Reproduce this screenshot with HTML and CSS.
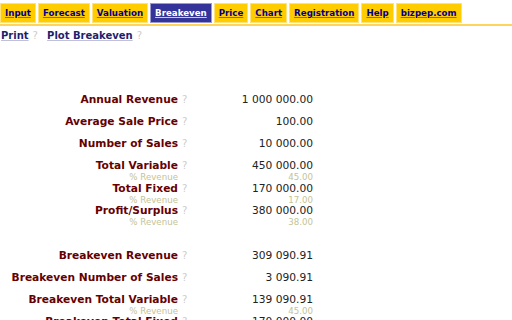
FILE: index.html
```html
<!DOCTYPE html>
<html>
<head>
<meta charset="utf-8">
<link rel="stylesheet" href="styles.css">
</head>
<body>
<nav class="tabs">
  <a class="tab" href="#">Input</a>
  <a class="tab" href="#">Forecast</a>
  <a class="tab" href="#">Valuation</a>
  <a class="tab active" href="#">Breakeven</a>
  <a class="tab" href="#">Price</a>
  <a class="tab" href="#">Chart</a>
  <a class="tab" href="#">Registration</a>
  <a class="tab" href="#">Help</a>
  <a class="tab" href="#">bizpep.com</a>
</nav>
<div class="sublinks">
  <a class="sublink" href="#">Print</a><span class="qm">?</span>
  <a class="sublink" href="#">Plot Breakeven</a><span class="qm">?</span>
</div>
<div class="results">
  <div class="block">
    <div class="row"><span class="label">Annual Revenue</span><span class="help">?</span><span class="value">1 000 000.00</span></div>
  </div>
  <div class="block">
    <div class="row"><span class="label">Average Sale Price</span><span class="help">?</span><span class="value">100.00</span></div>
  </div>
  <div class="block">
    <div class="row"><span class="label">Number of Sales</span><span class="help">?</span><span class="value">10 000.00</span></div>
  </div>
  <div class="block group">
    <div class="row"><span class="label">Total Variable</span><span class="help">?</span><span class="value">450 000.00</span></div>
    <div class="row subrow"><span class="label">% Revenue</span><span class="help"></span><span class="value">45.00</span></div>
    <div class="row"><span class="label">Total Fixed</span><span class="help">?</span><span class="value">170 000.00</span></div>
    <div class="row subrow"><span class="label">% Revenue</span><span class="help"></span><span class="value">17.00</span></div>
    <div class="row"><span class="label">Profit/Surplus</span><span class="help">?</span><span class="value">380 000.00</span></div>
    <div class="row subrow"><span class="label">% Revenue</span><span class="help"></span><span class="value">38.00</span></div>
  </div>
  <div class="block spaced">
    <div class="row"><span class="label">Breakeven Revenue</span><span class="help">?</span><span class="value">309 090.91</span></div>
  </div>
  <div class="block">
    <div class="row"><span class="label">Breakeven Number of Sales</span><span class="help">?</span><span class="value">3 090.91</span></div>
  </div>
  <div class="block group">
    <div class="row"><span class="label">Breakeven Total Variable</span><span class="help">?</span><span class="value">139 090.91</span></div>
    <div class="row subrow"><span class="label">% Revenue</span><span class="help"></span><span class="value">45.00</span></div>
    <div class="row"><span class="label">Breakeven Total Fixed</span><span class="help">?</span><span class="value">170 000.00</span></div>
    <div class="row subrow"><span class="label">% Revenue</span><span class="help"></span><span class="value">55.00</span></div>
  </div>
</div>
</body>
</html>
```

FILE: styles.css
```css
html, body {
  margin: 0;
  padding: 0;
  background: #ffffff;
  font-family: "DejaVu Sans", Verdana, sans-serif;
}

.tabs {
  display: flex;
  gap: 2px;
  padding: 3px 0 1px 0;
  border-bottom: 2px solid #ffd45a;
}

.tab {
  display: block;
  height: 18px;
  line-height: 18px;
  padding: 0 4px;
  background: #ffcc00;
  border: 1px solid #ffe27a;
  color: #00008b;
  font-size: 8.67px;
  font-weight: bold;
  text-decoration: underline;
  text-decoration-color: #6b6b8f;
}

.tab.active {
  background: #333399;
  border-color: #9a9ad0;
  color: #ffffff;
  text-decoration-color: #c8c8e8;
}

.sublinks {
  padding: 3px 0 0 1px;
  height: 14px;
  line-height: 14px;
  font-size: 10px;
}

.sublink {
  color: #1f1f6e;
  font-weight: bold;
  text-decoration: underline;
  text-decoration-color: #c0c0d6;
}

.qm {
  color: #cccccc;
  margin: 0 6px 0 4px;
}

.results {
  margin-top: 46px;
}

.block {
  padding: 5px 0;
}

.block.group {
  padding-bottom: 0;
}

.block.spaced {
  margin-top: 17px;
}

.row {
  display: grid;
  grid-template-columns: 178px 10px 125px;
  line-height: 12px;
  font-size: 10.67px;
}

.label {
  text-align: right;
  font-weight: bold;
  color: #660000;
  white-space: nowrap;
}

.help {
  padding-left: 4px;
  color: #cccccc;
  font-size: 10px;
}

.value {
  text-align: right;
  color: #222222;
  white-space: nowrap;
}

.subrow {
  line-height: 10.5px;
  font-size: 8.67px;
}

.subrow .label {
  font-weight: normal;
  color: #c4c497;
}

.subrow .value {
  color: #c4c497;
}
```
